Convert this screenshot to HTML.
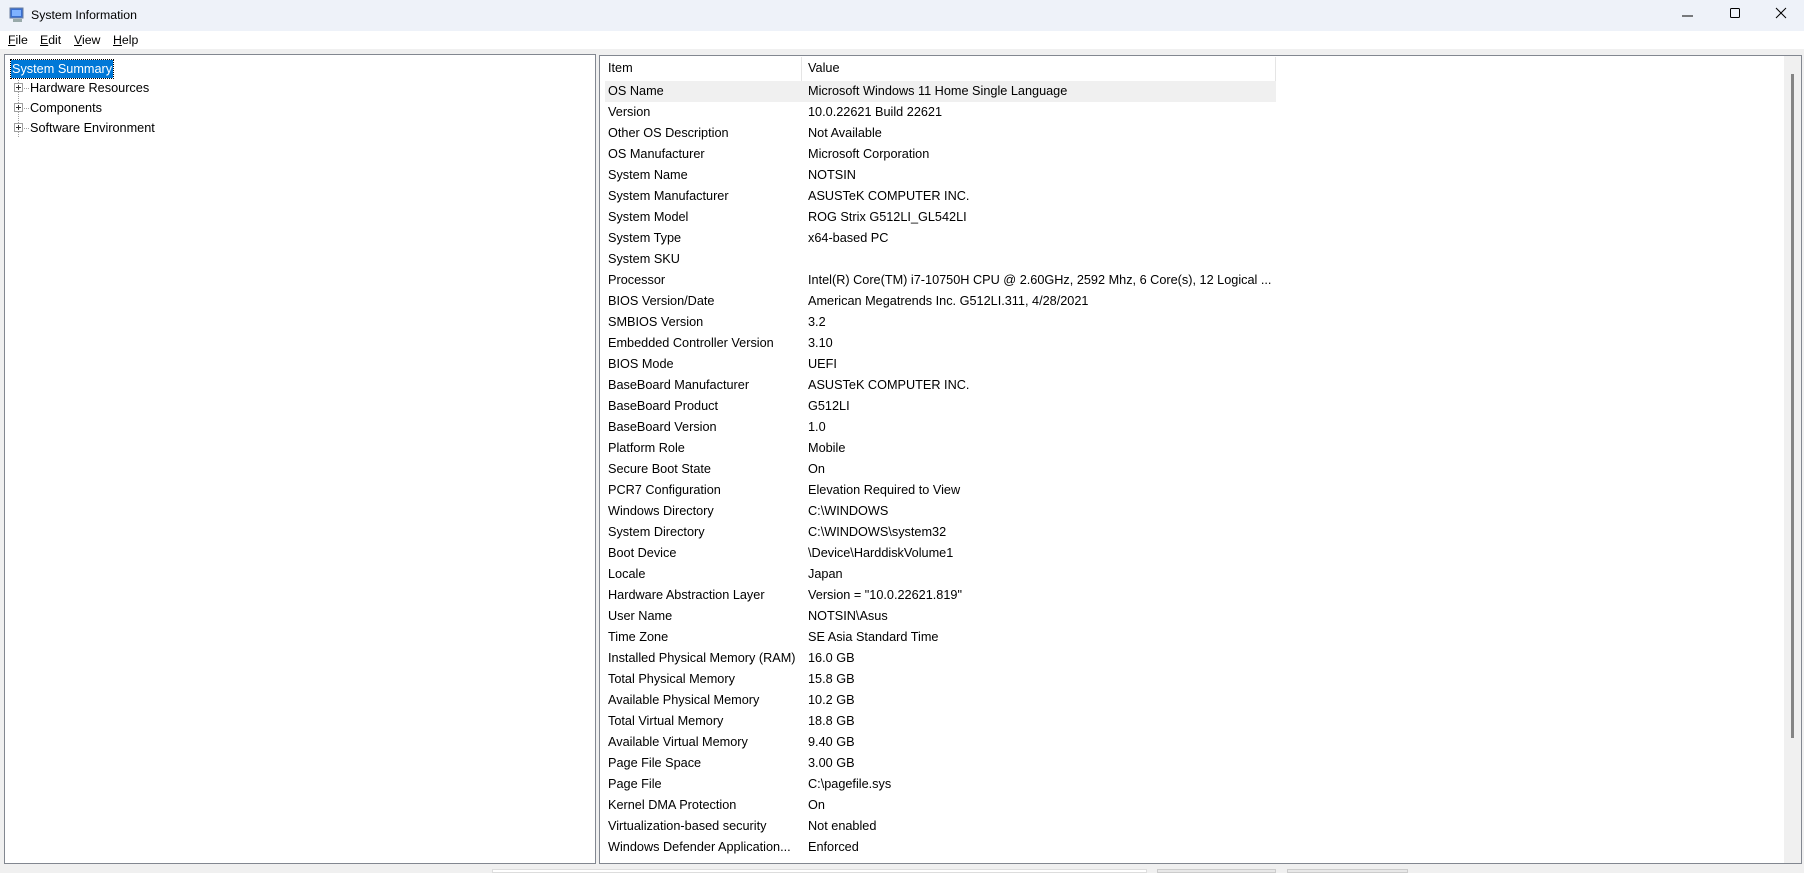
<!DOCTYPE html>
<html><head><meta charset="utf-8"><style>
*{margin:0;padding:0;box-sizing:border-box}
body{width:1804px;height:873px;background:#f0f0f0;font-family:"Liberation Sans",sans-serif;font-size:12.7px;color:#000;position:relative;overflow:hidden}
.title{position:absolute;left:0;top:0;width:1804px;height:31px;background:#eef2f9}
.title .t{position:absolute;left:31px;top:8px;font-size:12.3px}
.menu{position:absolute;left:0;top:31px;width:1804px;height:18px;background:#fff}
.menu span{position:absolute;top:2px;font-size:12.3px}
.left{position:absolute;left:4px;top:54px;width:592px;height:810px;background:#fff;border:1px solid #828790}
.right{position:absolute;left:599px;top:55px;width:1203px;height:809px;background:#fff;border:1px solid #828790}
.sel{position:absolute;left:6px;top:5px;height:18px;background:#0078d7;color:#fff;outline:1px dotted #000;padding:0 1px;line-height:18px;white-space:nowrap}
.node{position:absolute;left:25px;line-height:16px;white-space:nowrap}
.pb{position:absolute;left:9px;width:9px;height:9px;border:1px solid #a0a0a0;background:#fff}
.pb:before{content:"";position:absolute;left:1px;top:3px;width:5px;height:1px;background:#333}
.pb:after{content:"";position:absolute;left:3px;top:1px;width:1px;height:5px;background:#333}
.row{position:absolute;left:6px;height:21px;line-height:21px;width:1170px;white-space:nowrap}
.row .a{position:absolute;left:2px}
.row .b{position:absolute;left:202px}
</style></head><body>
<div class="title">
<svg style="position:absolute;left:9px;top:7px" width="15" height="16"><rect x="1" y="1" width="13" height="10" fill="#3a6fd0" stroke="#6b7fa0"/><rect x="3" y="3" width="9" height="6" fill="#7fb2ff"/><rect x="4" y="12" width="9" height="3" fill="#9aa"/></svg>
<span class="t">System Information</span>
<svg style="position:absolute;left:1680px;top:8px" width="16" height="16"><line x1="2" y1="8" x2="13" y2="8" stroke="#000"/></svg>
<svg style="position:absolute;left:1728px;top:6px" width="16" height="16"><rect x="2.5" y="2.5" width="9" height="9" rx="1" fill="none" stroke="#000"/></svg>
<svg style="position:absolute;left:1774px;top:6px" width="16" height="16"><path d="M2 2L12 12M12 2L2 12" stroke="#000"/></svg>
</div>
<div class="menu"><span style="left:8px"><u>F</u>ile</span><span style="left:40px"><u>E</u>dit</span><span style="left:74px"><u>V</u>iew</span><span style="left:113px"><u>H</u>elp</span></div>
<div class="left">
<div class="sel">System Summary</div>
<div style="position:absolute;left:13px;top:25px;height:57px;border-left:1px dotted #a0a0a0"></div>
<div class="pb" style="top:28px"></div><div style="position:absolute;left:19px;top:33px;width:5px;border-top:1px dotted #a0a0a0"></div><div class="node" style="top:25px">Hardware Resources</div>
<div class="pb" style="top:48px"></div><div style="position:absolute;left:19px;top:53px;width:5px;border-top:1px dotted #a0a0a0"></div><div class="node" style="top:45px">Components</div>
<div class="pb" style="top:68px"></div><div style="position:absolute;left:19px;top:73px;width:5px;border-top:1px dotted #a0a0a0"></div><div class="node" style="top:65px">Software Environment</div>
</div>
<div class="right">
<div style="position:absolute;left:0;top:1px;width:1180px;height:24px"><span style="position:absolute;left:8px;top:4px">Item</span><div style="position:absolute;left:201px;top:0;width:1px;height:24px;background:#e5e5e5"></div><span style="position:absolute;left:208px;top:4px">Value</span><div style="position:absolute;left:675px;top:0;width:1px;height:24px;background:#e5e5e5"></div></div>
<div style="position:absolute;left:5px;top:25px;width:671px;height:21px;background:#f0f0f0"></div>
<div id="rows"></div>
<div style="position:absolute;left:1184px;top:0;width:17px;height:807px;background:#f0f0f0"></div>
<div style="position:absolute;left:1191px;top:18px;width:3px;height:664px;background:#858585"></div>
</div>
<div style="position:absolute;left:492px;top:869px;width:655px;height:4px;background:#fff;border:1px solid #ddd"></div>
<div style="position:absolute;left:1157px;top:869px;width:119px;height:4px;background:#e8e8e8;border:1px solid #ccc"></div>
<div style="position:absolute;left:1287px;top:869px;width:121px;height:4px;background:#e8e8e8;border:1px solid #ccc"></div>
<script>
var d=[["OS Name","Microsoft Windows 11 Home Single Language"],["Version","10.0.22621 Build 22621"],["Other OS Description","Not Available"],["OS Manufacturer","Microsoft Corporation"],["System Name","NOTSIN"],["System Manufacturer","ASUSTeK COMPUTER INC."],["System Model","ROG Strix G512LI_GL542LI"],["System Type","x64-based PC"],["System SKU",""],["Processor","Intel(R) Core(TM) i7-10750H CPU @ 2.60GHz, 2592 Mhz, 6 Core(s), 12 Logical ..."],["BIOS Version/Date","American Megatrends Inc. G512LI.311, 4/28/2021"],["SMBIOS Version","3.2"],["Embedded Controller Version","3.10"],["BIOS Mode","UEFI"],["BaseBoard Manufacturer","ASUSTeK COMPUTER INC."],["BaseBoard Product","G512LI"],["BaseBoard Version","1.0"],["Platform Role","Mobile"],["Secure Boot State","On"],["PCR7 Configuration","Elevation Required to View"],["Windows Directory","C:\\WINDOWS"],["System Directory","C:\\WINDOWS\\system32"],["Boot Device","\\Device\\HarddiskVolume1"],["Locale","Japan"],["Hardware Abstraction Layer","Version = \"10.0.22621.819\""],["User Name","NOTSIN\\Asus"],["Time Zone","SE Asia Standard Time"],["Installed Physical Memory (RAM)","16.0 GB"],["Total Physical Memory","15.8 GB"],["Available Physical Memory","10.2 GB"],["Total Virtual Memory","18.8 GB"],["Available Virtual Memory","9.40 GB"],["Page File Space","3.00 GB"],["Page File","C:\\pagefile.sys"],["Kernel DMA Protection","On"],["Virtualization-based security","Not enabled"],["Windows Defender Application...","Enforced"]];
var h="";for(var i=0;i<d.length;i++){h+='<div class="row" style="top:'+(25+21*i)+'px"><span class="a"></span><span class="b"></span></div>';}
var r=document.getElementById("rows");r.innerHTML=h;var c=r.children;for(var i=0;i<d.length;i++){c[i].children[0].textContent=d[i][0];c[i].children[1].textContent=d[i][1];}
</script>
</body></html>
